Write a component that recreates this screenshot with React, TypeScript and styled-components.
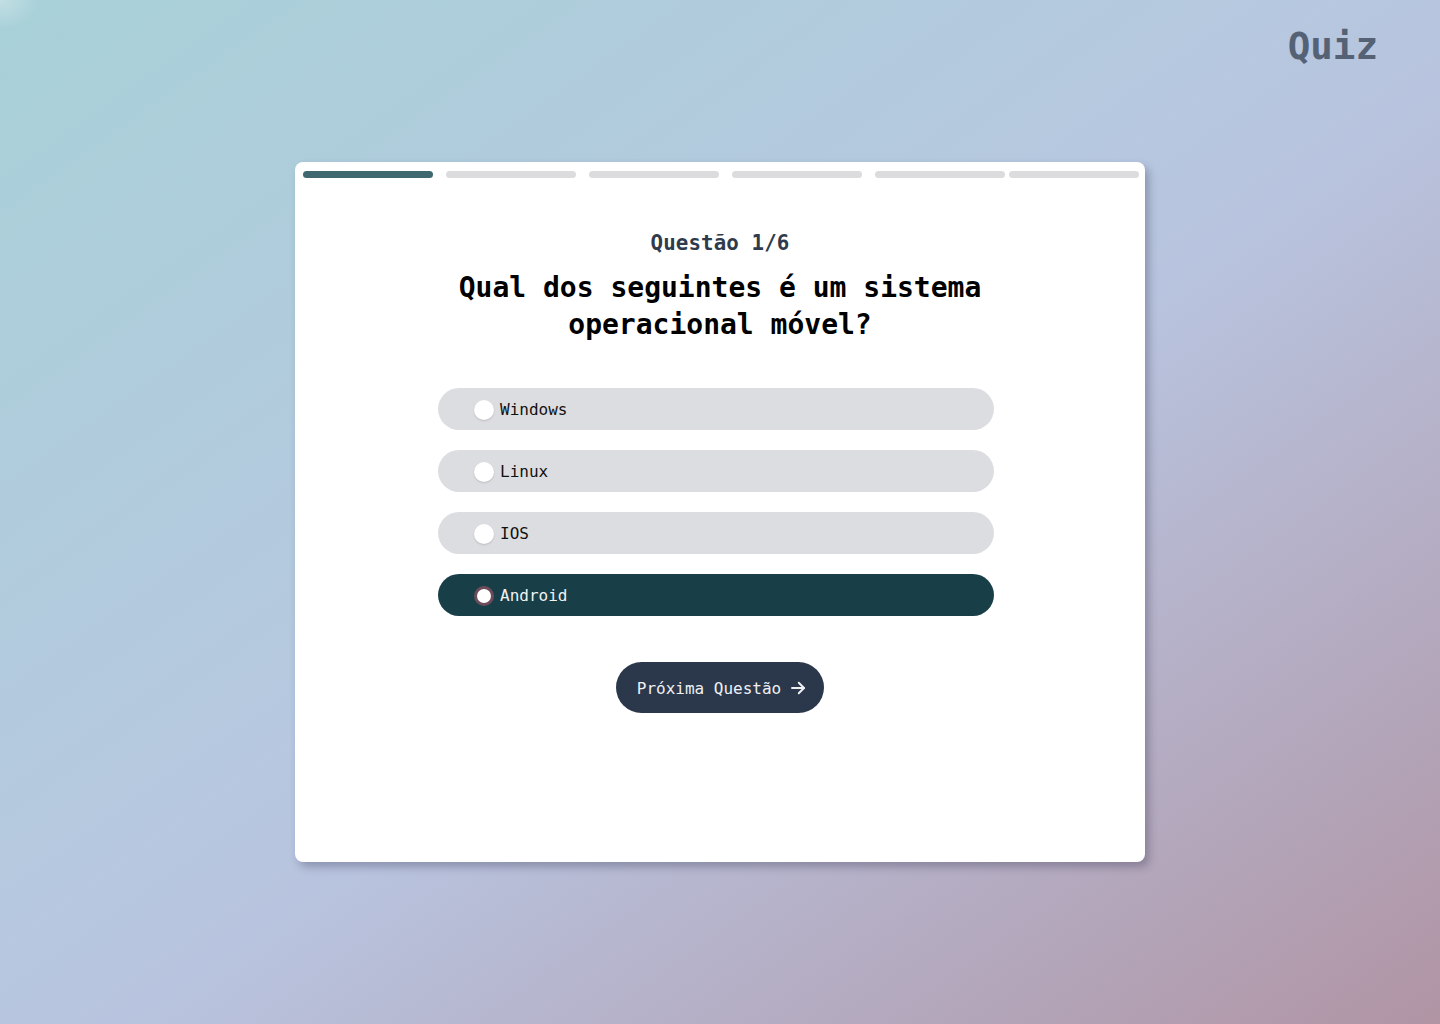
import React, { useState } from "react";
import styled, { createGlobalStyle } from "styled-components";

const GlobalStyle = createGlobalStyle`
  html, body { margin: 0; padding: 0; }
  body {
    font-family: "DejaVu Sans Mono", "Liberation Mono", monospace;
    min-height: 1024px;
    background:
      radial-gradient(ellipse 40px 30px at 0 0, rgba(255,255,255,0.3) 0, rgba(255,255,255,0) 100%),
      linear-gradient(to bottom right, #a8d1d8 0%, #b6c8df 45%, #b8c3de 55%, #b094a4 100%);
    background-attachment: fixed;
  }
  * { box-sizing: border-box; }
`;

const Page = styled.div`
  min-height: 1024px;
  display: flex;
  flex-direction: column;
  align-items: center;
`;

const Header = styled.header`
  align-self: stretch;
  display: flex;
  justify-content: flex-end;
  padding: 22px 62px 0 0;
  height: 162px;
`;

const Brand = styled.h1`
  margin: 0;
  font-size: 37.5px;
  line-height: 48px;
  font-weight: 700;
  color: #556275;
`;

const Card = styled.main`
  width: 850px;
  height: 700px;
  background: #fff;
  border-radius: 8px;
  box-shadow: 4px 5px 8px rgba(40, 40, 70, 0.3);
  display: flex;
  flex-direction: column;
  align-items: center;
`;

const Progress = styled.div`
  align-self: stretch;
  display: flex;
  padding: 9px 6px 0 8px;
`;

const Bar = styled.div<{ $active: boolean; $gap: number }>`
  width: 130px;
  height: 7px;
  border-radius: 4px;
  margin-right: ${(p) => p.$gap}px;
  background: ${(p) => (p.$active ? "#3f6870" : "#dcdcde")};
`;

const Counter = styled.h2`
  margin: 52px 0 0;
  font-size: 20.8px;
  line-height: 26px;
  font-weight: 700;
  color: #2f3b4d;
  letter-spacing: 0.1px;
`;

const Question = styled.h3`
  margin: 12.5px 0 0;
  width: 560px;
  text-align: center;
  font-size: 28px;
  line-height: 37px;
  font-weight: 700;
  color: #000;
`;

const Options = styled.div`
  margin: 45.5px 8px 0 0;
  display: flex;
  flex-direction: column;
  gap: 20px;
  width: 556px;
`;

const Option = styled.label<{ $selected: boolean }>`
  height: 42px;
  border-radius: 21px;
  display: flex;
  align-items: center;
  gap: 6px;
  padding: 1px 0 0 36px;
  cursor: pointer;
  background: ${(p) => (p.$selected ? "#183f48" : "#dcdde0")};
  color: ${(p) => (p.$selected ? "#f2f2f2" : "#111")};
  font-size: 16px;
`;

const Radio = styled.span<{ $selected: boolean }>`
  width: 20px;
  height: 20px;
  border-radius: 50%;
  background: #fff;
  flex-shrink: 0;
  border: ${(p) => (p.$selected ? "3px solid #6e4b5b" : "none")};
  box-shadow: ${(p) => (p.$selected ? "none" : "0 1px 2px rgba(0,0,0,0.15)")};
`;

const NextButton = styled.button`
  margin-top: 46px;
  width: 208px;
  height: 51px;
  border: none;
  border-radius: 26px;
  background: #2b384b;
  color: #eef0f3;
  font-family: inherit;
  font-size: 16px;
  display: flex;
  align-items: center;
  justify-content: center;
  gap: 8px;
  padding: 1px 0 0 4px;
  cursor: pointer;
`;

const options = ["Windows", "Linux", "IOS", "Android"];
const gaps = [13, 13, 13, 13, 4, 0];

export default function App() {
  const [selected, setSelected] = useState(3);
  return (
    <>
      <GlobalStyle />
      <Page>
        <Header>
          <Brand>Quiz</Brand>
        </Header>
        <Card>
          <Progress>
            {gaps.map((g, i) => (
              <Bar key={i} $active={i === 0} $gap={g} />
            ))}
          </Progress>
          <Counter>Questão 1/6</Counter>
          <Question>Qual dos seguintes é um sistema operacional móvel?</Question>
          <Options>
            {options.map((o, i) => (
              <Option key={o} $selected={selected === i} onClick={() => setSelected(i)}>
                <Radio $selected={selected === i} />
                {o}
              </Option>
            ))}
          </Options>
          <NextButton>
            Próxima Questão
            <svg width="18" height="18" viewBox="0 0 24 24" fill="none" stroke="currentColor" strokeWidth="2.6" strokeLinecap="round" strokeLinejoin="round">
              <path d="M4 12h16" />
              <path d="M13 5l7 7-7 7" />
            </svg>
          </NextButton>
        </Card>
      </Page>
    </>
  );
}
